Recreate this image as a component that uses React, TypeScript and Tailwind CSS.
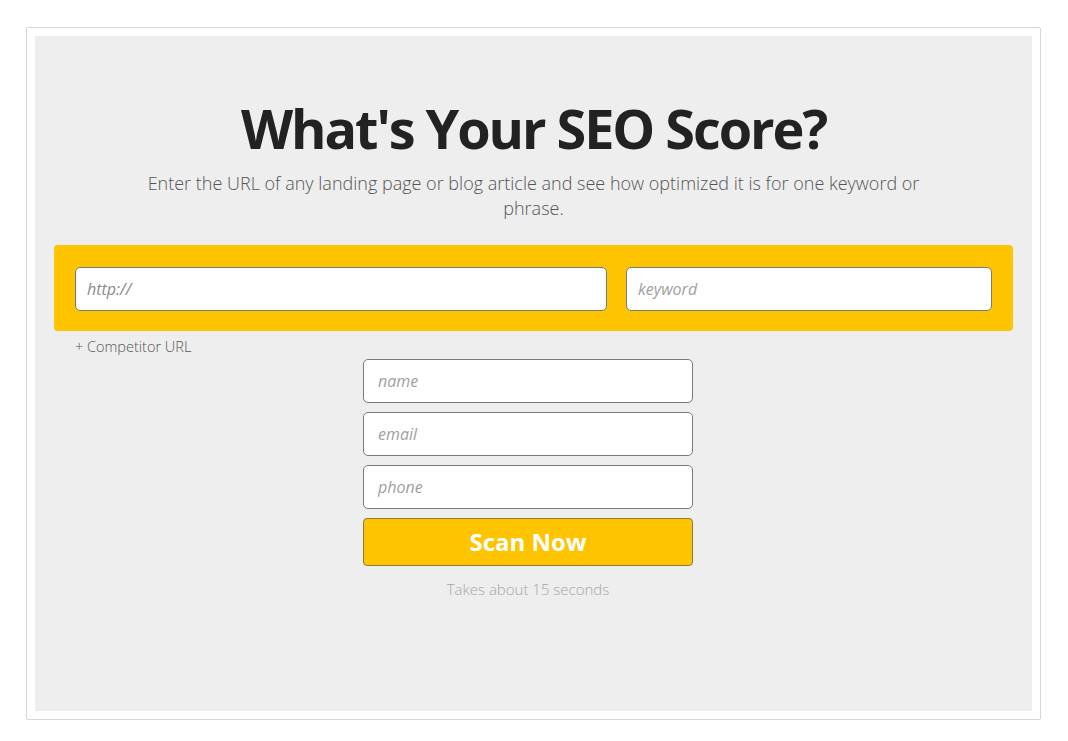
import React from "react";

const font = { fontFamily: '"Open Sans", "Liberation Sans", sans-serif' };

export default function App() {
  return (
    <div className="w-full h-[741px] bg-white pt-[27px] pl-[26px]" style={font}>
      <div className="w-[1015px] h-[693px] border border-[#d6d6d6] rounded-[2px] p-[8px]">
        <div className="w-full h-full bg-[#eeeeee] pt-[60px] pl-[19px] pr-[19px]">
          <h1 className="text-center text-[54px] leading-[64px] font-bold tracking-[-2.05px] text-[#222222]">
            What's Your SEO Score?
          </h1>
          <p className="mx-auto mt-[11px] w-[800px] text-center text-[18px] leading-[25px] font-light text-[#555555]">
            Enter the URL of any landing page or blog article and see how optimized it is for one keyword or phrase.
          </p>
          <div className="mt-[24px] flex gap-[19px] rounded-[4px] bg-[#ffc400] pl-[21px] pr-[21px] pt-[22px] pb-[20px]">
            <input
              placeholder="http://"
              className="h-[44px] w-[532px] rounded-[5px] border border-[#7a7a7a] bg-white pl-[11px] text-[16px] italic text-[#444] placeholder:text-[#8a8a8a] outline-none"
              style={font}
            />
            <input
              placeholder="keyword"
              className="h-[44px] flex-1 rounded-[5px] border border-[#7a7a7a] bg-white pl-[11px] text-[16px] italic text-[#444] placeholder:text-[#a0a0a0] outline-none"
              style={font}
            />
          </div>
          <div className="mt-[6px] pl-[21px] text-[14.5px] leading-[20px] font-light text-[#555555]">+ Competitor URL</div>
          <div className="ml-[309px] mt-[2px] flex w-[330px] flex-col gap-[9px]">
            {["name", "email", "phone"].map((p) => (
              <input
                key={p}
                placeholder={p}
                className="h-[44px] w-full rounded-[5px] border border-[#7a7a7a] bg-white pl-[14px] text-[16px] italic text-[#444] placeholder:text-[#a0a0a0] outline-none"
                style={font}
              />
            ))}
            <button
              className="h-[48px] w-full rounded-[4px] border border-[#8d7b35] bg-[#ffc400] text-[24px] font-bold text-white"
              style={font}
            >
              Scan Now
            </button>
            <div className="mt-[4px] text-center text-[15px] leading-[20px] font-light text-[#a6a6a6]">
              Takes about 15 seconds
            </div>
          </div>
        </div>
      </div>
    </div>
  );
}
